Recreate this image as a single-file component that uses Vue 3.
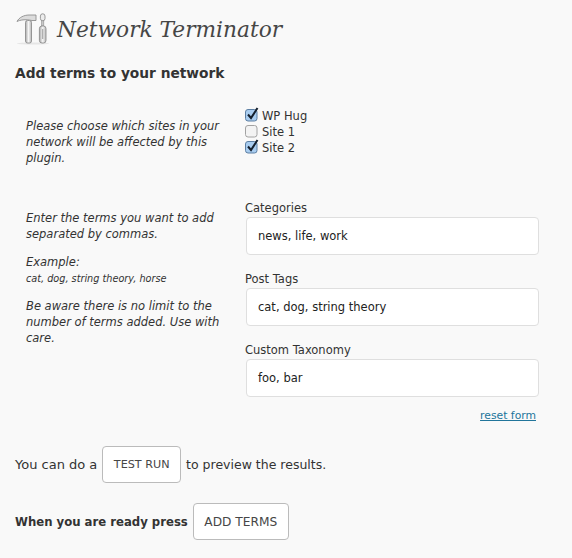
<script setup>
const sites = [
  { name: 'WP Hug', checked: true },
  { name: 'Site 1', checked: false },
  { name: 'Site 2', checked: true }
]
const fields = [
  { label: 'Categories', value: 'news, life, work' },
  { label: 'Post Tags', value: 'cat, dog, string theory' },
  { label: 'Custom Taxonomy', value: 'foo, bar' }
]
</script>

<template>
  <div class="page">
    <header class="title-row">
      <svg class="logo" width="34" height="32" viewBox="0 0 34 32" fill="none">
        <defs>
          <linearGradient id="metal" x1="0" y1="0" x2="1" y2="0">
            <stop offset="0" stop-color="#a8a8a8" />
            <stop offset="0.5" stop-color="#f6f6f6" />
            <stop offset="1" stop-color="#b4b4b4" />
          </linearGradient>
        </defs>
        <ellipse cx="17" cy="30.5" rx="16" ry="1" fill="#e6e6e6" />
        <path d="M1 8.5C3 4.5 8 2 13 2H20V7.5H16C9 6 4 7 1 8.5Z" fill="#dcdcdc" stroke="#8f8f8f" stroke-width="0.9" />
        <rect x="9.5" y="7.5" width="6" height="22.5" rx="2" fill="url(#metal)" stroke="#8f8f8f" stroke-width="0.9" />
        <rect x="24.4" y="0.8" width="4.6" height="7" rx="2.3" fill="#ececec" stroke="#8f8f8f" stroke-width="0.9" />
        <rect x="25.6" y="7.8" width="2.2" height="5.2" fill="#c8c8c8" stroke="#8f8f8f" stroke-width="0.6" />
        <rect x="23.4" y="13" width="6.6" height="17" rx="2.6" fill="url(#metal)" stroke="#8f8f8f" stroke-width="0.9" />
        <path d="M26.7 16V26" stroke="#a4a4a4" stroke-width="1.1" />
      </svg>
      <h1 class="title">Network Terminator</h1>
    </header>

    <h3 class="subtitle">Add terms to your network</h3>

    <section class="row row-sites">
      <div class="help"><p>Please choose which sites in your network will be affected by this plugin.</p></div>
      <div class="sites">
        <label v-for="s in sites" :key="s.name" class="site">
          <svg class="check" width="14" height="15" viewBox="0 0 14 15">
            <rect x="0.5" y="2.5" width="11.5" height="11.5" rx="2.5" :fill="s.checked ? '#a9cdf0' : '#f3f3f3'" :stroke="s.checked ? '#5d7fa3' : '#a2a2a2'" />
            <path v-if="s.checked" d="M3 7.5L6 11L12.5 1" fill="none" stroke="#15202e" stroke-width="2" />
          </svg>
          <span>{{ s.name }}</span>
        </label>
      </div>
    </section>

    <section class="row row-terms">
      <div class="help">
        <p class="enter">Enter the terms you want to add separated by commas.</p>
        <p class="example">Example:<br /><small>cat, dog, string theory, horse</small></p>
        <p>Be aware there is no limit to the number of terms added. Use with care.</p>
      </div>
      <div class="fields">
        <div v-for="f in fields" :key="f.label" class="field">
          <label>{{ f.label }}</label>
          <div class="input">{{ f.value }}</div>
        </div>
        <div class="reset"><a href="#">reset form</a></div>
      </div>
    </section>

    <div class="action action-test">
      <span class="lead">You can do a</span>
      <button type="button" class="btn-test">TEST RUN</button>
      <span>to preview the results.</span>
    </div>
    <div class="action action-add">
      <strong>When you are ready press</strong>
      <button type="button" class="btn-add">ADD TERMS</button>
    </div>
  </div>
</template>

<style scoped>
.page {
  width: 572px;
  height: 558px;
  box-sizing: border-box;
  padding: 13px 15px 0;
  background: #f9f9f9;
  color: #333;
  font-family: "DejaVu Sans", sans-serif;
  font-size: 11.5px;
  overflow: hidden;
}
.title-row {
  display: flex;
  align-items: center;
  height: 32px;
  padding-left: 1px;
}
.logo { flex: none; }
.title {
  margin: 0 0 0 7px;
  font-family: "DejaVu Serif", serif;
  font-style: italic;
  font-weight: 400;
  font-size: 21.7px;
  color: #464646;
  white-space: nowrap;
}
.subtitle {
  margin: 19px 0 0;
  font-size: 13.75px;
  line-height: 18px;
  font-weight: 700;
  color: #333;
}
.row { display: flex; }
.help {
  width: 230px;
  box-sizing: border-box;
  padding: 0 25px 0 11px;
  flex: none;
  font-style: italic;
  line-height: 16px;
  color: #333;
}
.help p { margin: 0 0 11px; }
.help .enter { margin-bottom: 12px; }
.help small { font-size: 9.7px; }
.row-sites { margin-top: 26px; }
.row-sites .help { padding-top: 10px; }
.sites { display: flex; flex-direction: column; }
.site {
  display: flex;
  align-items: center;
  height: 16px;
  gap: 3px;
  color: #333;
}
.check { flex: none; margin-top: -3px; }
.row-terms { margin-top: 23px; }
.row-terms .help { padding-top: 10px; }
.fields { width: 294px; }
.field label { display: block; line-height: 16px; color: #333; }
.field { margin-bottom: 16px; }
.input {
  box-sizing: border-box;
  height: 38px;
  width: 293px;
  margin: 1px 0 0 1px;
  padding-left: 11px;
  background: #fff;
  border: 1px solid #dfdfdf;
  border-radius: 4px;
  line-height: 36px;
  color: #222;
}
.reset {
  margin-top: -4px;
  padding-right: 3px;
  text-align: right;
  font-size: 10.8px;
  line-height: 14px;
}
.reset a { color: #21759b; }
.action {
  display: flex;
  align-items: center;
  gap: 5px;
  font-size: 12.5px;
}
.action .lead { font-size: 13px; }
.action strong { font-size: 11.7px; }
.action-test { margin-top: 23px; }
.action-add { margin-top: 20px; }
button {
  height: 37px;
  padding: 0 10.5px;
  background: #fff;
  border: 1px solid #bbb;
  border-radius: 4px;
  font-family: "DejaVu Sans", sans-serif;
  color: #464646;
}
.btn-test { font-size: 11.2px; }
.btn-add { font-size: 12.2px; }
</style>
